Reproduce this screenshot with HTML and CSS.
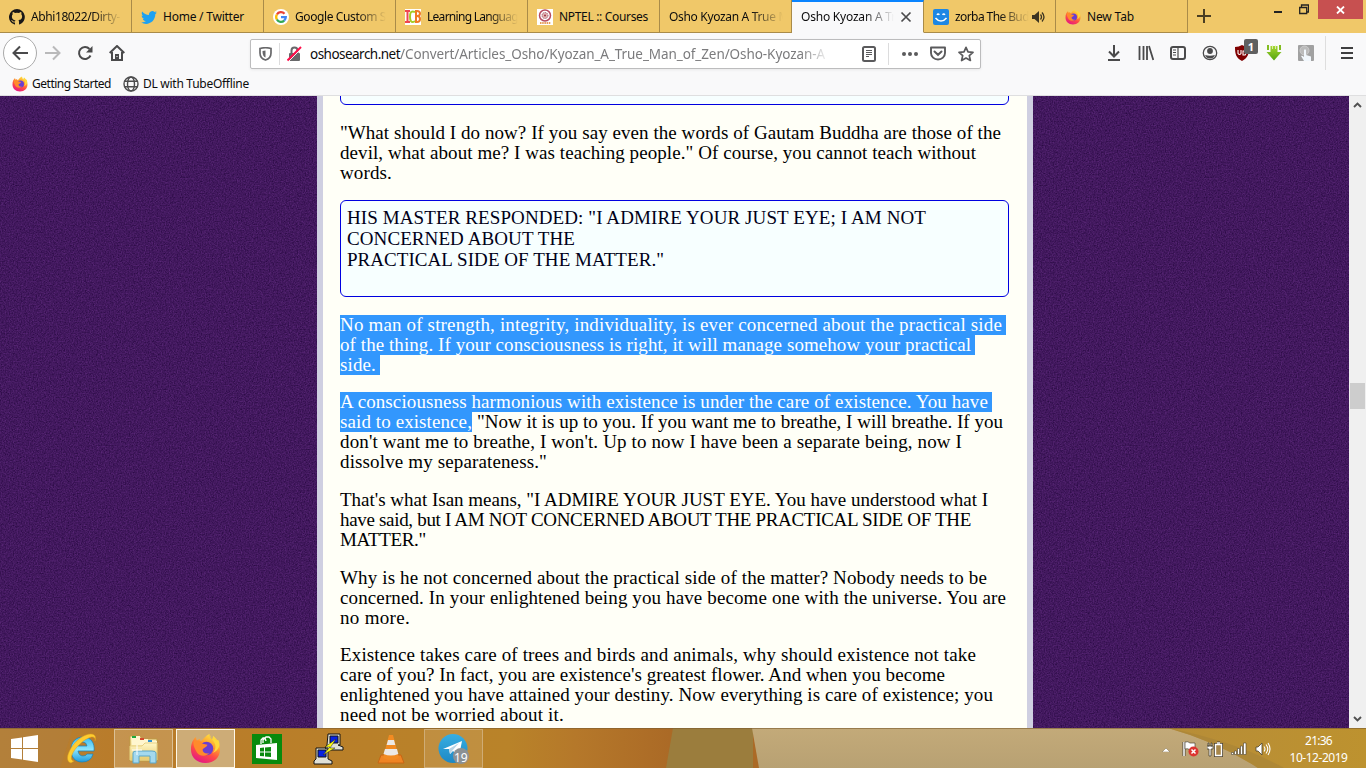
FILE: index.html
```html
<!DOCTYPE html>
<html lang="en">
<head>
<meta charset="utf-8">
<title>Osho Kyozan A True Man of Zen</title>
<link rel="stylesheet" href="styles.css">
</head>
<body>
<svg class="defs" width="0" height="0" aria-hidden="true">
  <defs>
    <linearGradient id="fx" x1=".8" y1="0" x2=".3" y2="1"><stop offset="0" stop-color="#fff044"/><stop offset=".35" stop-color="#ffa22e"/><stop offset=".65" stop-color="#ff4a45"/><stop offset="1" stop-color="#e31587"/></linearGradient>
    <linearGradient id="ie" x1="0" y1="0" x2="0" y2="1"><stop offset="0" stop-color="#39b9f0"/><stop offset=".5" stop-color="#8ce5fb"/><stop offset="1" stop-color="#219bdc"/></linearGradient>
    <linearGradient id="folder" x1="0" y1="0" x2="0" y2="1"><stop offset="0" stop-color="#fff7c8"/><stop offset="1" stop-color="#e9cb6a"/></linearGradient>
    <linearGradient id="tg" x1="0" y1="0" x2="0" y2="1"><stop offset="0" stop-color="#37aee2"/><stop offset="1" stop-color="#1e88c4"/></linearGradient>
    <linearGradient id="dl" x1="0" y1="0" x2="0" y2="1"><stop offset="0" stop-color="#a5d72e"/><stop offset="1" stop-color="#54a310"/></linearGradient>
    <symbol id="firefox" viewBox="0 0 32 32">
      <path d="M1 17C1 10 3 7 6 4l1 4 3-2 1 3c3-3 5-6 9-8 0 3 1 4 3 6l1-4c5 4 7 8 7 14 0 8-6 14-15 14S1 25 1 17z" fill="url(#fx)"/>
      <circle cx="17" cy="16" r="7" fill="#6a3fd0"/>
      <path d="M4 8c4-1 7 0 9 3l5 1c-1 3-4 3-5 5 0 3 3 5 7 4-4 4-12 3-14-3C4 15 3 11 4 8z" fill="#ff8a2b"/>
      <path d="M20 1c0 4 5 6 6 11 1 4-1 7-3 9 7-3 9-9 6-14l-2 1-3-5-1 4z" fill="#ffd83b"/>
    </symbol>
  </defs>
</svg>

<div class="tabs">
  <div class="tab">
    <svg class="fav" viewBox="0 0 16 16"><path d="M8 0a8 8 0 0 0-2.5 15.600c.4.1.5-.2.5-.4v-1.700c-2.200.5-2.700-.9-2.700-.9-.4-1-.9-1.200-.9-1.200-.7-.5.1-.5.1-.5.800.1 1.200.8 1.200.8.7 1.300 1.900.9 2.300.7.100-.5.3-.9.5-1.100-1.800-.2-3.600-.9-3.600-4 0-.9.3-1.600.8-2.100-.1-.2-.4-1 .1-2.100 0 0 .7-.2 2.200.8a7.600 7.600 0 0 1 4 0c1.500-1 2.200-.8 2.200-.8.4 1.100.2 1.900.1 2.100.5.6.8 1.300.8 2.100 0 3.100-1.900 3.700-3.700 3.900.3.300.6.8.6 1.500v2.400c0 .2.100.5.600.4A8 8 0 0 0 8 0z" fill="#191717"/></svg>
    <span class="label fade"><span data-w="89">Abhi18022/Dirty-</span></span>
  </div>
  <div class="tab">
    <svg class="fav" viewBox="0 0 16 16"><path d="M16 3.500l-1.700.5 1.300-1.700-2 .8A3.300 3.300 0 0 0 8 6C5.300 6 3 4.600 1.200 2.500.3 4 .8 6 2.200 7L.7 6.500c0 1.600 1.100 3 2.700 3.300l-1.500.1c.4 1.300 1.600 2.200 3.100 2.200A6.700 6.700 0 0 1 .1 13.500c6.700 3.800 14.200-.7 14.200-8.200z" fill="#1da1f2"/></svg>
    <span class="label"><span data-w="81">Home / Twitter</span></span>
  </div>
  <div class="tab">
    <svg class="fav" viewBox="0 0 16 16"><circle cx="8" cy="8" r="8" fill="#fff"/><g fill="none" stroke-width="2.300"><path d="M3.900 5.500A4.800 4.800 0 0 1 11.500 4.700" stroke="#ea4335"/><path d="M3.900 10.500a4.800 4.800 0 0 1 0-5" stroke="#fbbc05"/><path d="M11.200 11.600a4.800 4.800 0 0 1-7.300-1.100" stroke="#34a853"/><path d="M8 8.100h4.800a4.800 4.800 0 0 1-1.600 3.500" stroke="#4285f4"/></g></svg>
    <span class="label fade"><span data-w="91">Google Custom S</span></span>
  </div>
  <div class="tab">
    <svg class="fav" viewBox="0 0 16 16"><path d="M0 0h16v16H0z" fill="#fff"/><g fill="none" stroke-width="2"><path d="M0 2h5M2.500 2v11M0 13h5" stroke="#ef4650"/><path d="M10 3C5 1 5 5 5 8s1 7 5 4" stroke="#a5cd25"/><path d="M11 2v11M10 2h2q3 0 3 2.500T12 7h-1 1q3 0 3 3t-3 3h-2" stroke="#f17a24"/></g></svg>
    <span class="label fade"><span data-w="91">Learning Languag</span></span>
  </div>
  <div class="tab">
    <svg class="fav" viewBox="0 0 16 16"><path d="M0 0h16v16H0z" fill="#fff"/><circle cx="8" cy="6.500" r="5.500" fill="none" stroke="#b64c60" stroke-width="1.500"/><circle cx="8" cy="6.500" r="3" fill="#e2b7b3" stroke="#8f4660" stroke-dasharray="1 1"/><circle cx="8" cy="6.500" r="1" fill="#a12c44"/><path d="M3 14h11" stroke="#e79a57" stroke-width="2" stroke-dasharray="1.500 .7"/></svg>
    <span class="label"><span data-w="89">NPTEL :: Courses</span></span>
  </div>
  <div class="tab plain"><span class="label fade wide"><span data-w="120">Osho Kyozan A True M</span></span></div>
  <div class="tab plain active"><span class="label fade"><span data-w="95">Osho Kyozan A Tr</span></span>
    <svg class="close" viewBox="0 0 12 12"><path d="M1.500 1.500l9 9m0-9l-9 9" stroke="#4b4b4d" stroke-width="1.700"/></svg></div>
  <div class="tab">
    <svg class="fav" viewBox="0 0 16 16"><rect width="16" height="16" rx="2" fill="#1d87e4"/><path d="M4 5.800q1-1.600 2.400 0m3.200 0q1-1.600 2.400 0M2.500 9q2.500 3 5.500 3t5.500-3" stroke="#fff" fill="none" stroke-width="1.500"/></svg>
    <span class="label fade short"><span data-w="74">zorba The Bud</span></span>
    <svg class="sound" viewBox="0 0 14 12"><path d="M0 4h2.500L7 0v12L2.500 8H0z" fill="#3c3421"/><path d="M8.500 3.500q2 2.500 0 5m1.500-7q4 4.500 0 9" fill="none" stroke="#3c3421" stroke-width="1.300"/></svg>
  </div>
  <div class="tab"><svg class="fav"><use href="#firefox"/></svg><span class="label"><span data-w="47">New Tab</span></span></div>
  <svg class="plus" viewBox="0 0 14 14"><path d="M7 0v14M0 7h14" stroke="#4a3e22" stroke-width="2"/></svg>
  <div class="winctl">
    <svg width="8" height="20"><path d="M0 12h8" stroke="#222" stroke-width="2"/></svg>
    <svg width="10" height="20"><path d="M.7 7.500h7v6h-7zM2.500 7V5h7v7H8" fill="none" stroke="#222" stroke-width="1.300"/></svg>
    <div class="winclose"><svg width="9" height="8" viewBox="0 0 9 8"><path d="M1 .5l7 7m0-7l-7 7" stroke="#fff" stroke-width="1.800"/></svg></div>
  </div>
</div>

<div class="nav">
  <div class="left">
    <span class="back"><svg width="16" height="16" viewBox="0 0 16 16"><path d="M8 1.500L1.500 8 8 14.500M1.500 8H16" fill="none" stroke="#4a4a4b" stroke-width="2"/></svg></span>
    <svg width="16" height="16" viewBox="0 0 16 16"><path d="M8 1.500L14.500 8 8 14.500M14.500 8H0" fill="none" stroke="#b9b9ba" stroke-width="2"/></svg>
    <svg width="16" height="16" viewBox="0 0 16 16"><path d="M13.500 10.500A6 6 0 1 1 12.500 4" fill="none" stroke="#4a4a4b" stroke-width="2"/><path d="M15.500 1v6.500H9z" fill="#4a4a4b"/></svg>
    <svg width="16" height="16" viewBox="0 0 16 16"><path d="M.7 8L8 1l7.300 7M3 7v8h10V7" fill="none" stroke="#4a4a4b" stroke-width="2"/><path d="M6 15V9h4v6" fill="#4a4a4b"/><path d="M8 11v1" stroke="#fff"/></svg>
  </div>
  <div class="url">
    <svg class="shield" width="13" height="14" viewBox="0 0 13 14"><path d="M1 1.500Q6.500 0 12 1.500V6c0 4-2 6-5.500 7C3 12 1 10 1 6z" fill="none" stroke="#68686a" stroke-width="1.700"/><path d="M6.500 3.500v7C4.500 9.500 3.500 8 3.500 4z" fill="#68686a"/></svg>
    <i class="usep"></i>
    <svg class="lock" width="15" height="16" viewBox="0 0 15 16"><path d="M4.500 7V4.500a3 3 0 0 1 6 0V7" fill="none" stroke="#68686a" stroke-width="2"/><rect x="2" y="7" width="11" height="8" rx="1" fill="#68686a"/><path d="M1.500 15.500L14.500 2.500" stroke="#fff" stroke-width="1"/><path d="M.5 14.500L14 1" stroke="#ff0f4b" stroke-width="2"/></svg>
    <span class="host" data-w="90">oshosearch.net</span><span class="path"><span data-w="425">/Convert/Articles_Osho/Kyozan_A_True_Man_of_Zen/Osho-Kyozan-A</span></span>
    <svg class="reader" width="14" height="16" viewBox="0 0 14 16"><rect x="1" y="1" width="12" height="14" rx="1.500" fill="none" stroke="#5a5a5c" stroke-width="2"/><path d="M4 4.500h6M4 6.500h6M4 8.500h6M4 10.500h3" stroke="#5a5a5c"/></svg>
    <i class="usep"></i>
    <svg class="dots" width="16" height="4"><g fill="#5a5a5c"><circle cx="2" cy="2" r="2"/><circle cx="8" cy="2" r="2"/><circle cx="14" cy="2" r="2"/></g></svg>
    <svg class="pocket" width="16" height="15" viewBox="0 0 16 15"><path d="M1 1.500h14v5.500a7 6.500 0 0 1-14 0z" fill="none" stroke="#5a5a5c" stroke-width="1.900" stroke-linejoin="round"/><path d="M4.500 5.500L8 8.800l3.500-3.300" fill="none" stroke="#5a5a5c" stroke-width="2" stroke-linecap="round"/></svg>
    <svg class="star" width="16" height="16" viewBox="0 0 16 16"><path d="M8 1.300l2 4.500 5 .5-3.700 3.300 1.100 4.900L8 12l-4.400 2.500 1.100-4.900L1 6.300l5-.5z" fill="none" stroke="#5a5a5c" stroke-width="1.700" stroke-linejoin="round"/></svg>
  </div>
  <div class="right">
    <svg viewBox="0 0 16 16"><path d="M8 0v11M3 6.500L8 11.500l5-5M2 15h12" fill="none" stroke="#4a4a4b" stroke-width="2"/></svg>
    <svg viewBox="0 0 16 16"><path d="M1.500 1v14M5.500 1v14M9 1v14M11 1l4.300 14" fill="none" stroke="#4a4a4b" stroke-width="1.800"/></svg>
    <svg viewBox="0 0 16 16"><rect x="1" y="2" width="14" height="12" rx="2" fill="none" stroke="#4a4a4b" stroke-width="2"/><path d="M8 2v12M3 5h3M3 7.500h3M3 10h3" stroke="#4a4a4b" stroke-width="1.200"/></svg>
    <svg viewBox="0 0 16 16"><circle cx="8" cy="8" r="6.700" fill="none" stroke="#4a4a4b" stroke-width="1.300"/><circle cx="8" cy="6" r="2.900" fill="#4a4a4b"/><path d="M3 10q5 1.500 10 0-1.500 3.600-5 3.600T3 10z" fill="#4a4a4b"/></svg>
    <span class="ublock"><svg viewBox="0 0 16 16"><path d="M8 0q3 2 7 2c0 7-1 11-7 14C2 13 1 9 1 2q4 0 7-2z" fill="#800000"/><path d="M4 5v3.500q1.500 2 3 0V5m2 5V6h2q2 2 0 4z" fill="none" stroke="#fff" stroke-width="1.100"/></svg><b>1</b></span>
    <svg viewBox="0 0 16 16"><path d="M4.500 1h7v6h4L8 15.500.5 7h4z" fill="url(#dl)"/><path d="M2 0v5M14 0v5" stroke="#83bd21" stroke-width="2"/><path d="M6.500 0v4M9.500 0v4" stroke="#e9f4d1" stroke-width=".8"/></svg>
    <svg viewBox="0 0 16 16"><rect width="16" height="16" rx="1" fill="#a1a1a1"/><circle cx="6.500" cy="5.500" r="4.500" fill="#bbb" stroke="#ccc"/><path d="M6 5q1-1.500 2 0v5l5 1.500V16H6l-3-5q1-1 3 1z" fill="#f1f7fc"/></svg>
    <i class="nsep"></i>
    <svg class="menu" width="12" height="12"><path d="M0 1h12M0 6h12M0 11h12" stroke="#3f3f40" stroke-width="2"/></svg>
  </div>
</div>

<div class="bookmarks">
  <svg width="16" height="16"><use href="#firefox"/></svg><span data-w="79">Getting Started</span>
  <svg class="globe" width="16" height="16" viewBox="0 0 16 16"><g fill="none" stroke="#4c4c4d" stroke-width="1.400"><circle cx="8" cy="8" r="7"/><ellipse cx="8" cy="8" rx="3.500" ry="7"/><path d="M1.500 5.200h13M1.500 10.800h13"/></g></svg><span data-w="106">DL with TubeOffline</span>
</div>

<div class="page">
  <svg class="texture" width="1349" height="632"><filter id="noise" x="0" y="0" width="100%" height="100%" color-interpolation-filters="sRGB"><feTurbulence type="fractalNoise" baseFrequency=".75" numOctaves="2" seed="4"/><feColorMatrix values=".23 .08 0 0 .105  .14 .05 0 0 .002  .25 .08 0 0 .205  0 0 0 0 1"/></filter><rect width="1349" height="632" filter="url(#noise)"/></svg>
  <main class="sheet">
    <div class="quote first"></div>
    <p><span class="ln"><span data-w="661">"What should I do now? If you say even the words of Gautam Buddha are those of the</span></span>
    <span class="ln"><span data-w="636">devil, what about me? I was teaching people." Of course, you cannot teach without</span></span>
    <span class="ln"><span data-w="52">words.</span></span></p>
    <div class="quote"><span class="ln"><span data-w="579">HIS MASTER RESPONDED: "I ADMIRE YOUR JUST EYE; I AM NOT</span></span>
    <span class="ln"><span data-w="228">CONCERNED ABOUT THE</span></span>
    <span class="ln"><span data-w="317">PRACTICAL SIDE OF THE MATTER."</span></span></div>
    <p><span class="ln"><span class="sel more" data-w="662">No man of strength, integrity, individuality, is ever concerned about the practical side</span></span>
    <span class="ln"><span class="sel more" data-w="631">of the thing. If your consciousness is right, it will manage somehow your practical</span></span>
    <span class="ln"><span class="sel more" data-w="36">side.</span></span></p>
    <p><span class="ln"><span class="sel more" data-w="648">A consciousness harmonious with existence is under the care of existence. You have</span></span>
    <span class="ln"><span class="sel" data-w="132">said to existence,</span><span class="rest" data-w="526">"Now it is up to you. If you want me to breathe, I will breathe. If you</span></span>
    <span class="ln"><span data-w="622">don't want me to breathe, I won't. Up to now I have been a separate being, now I</span></span>
    <span class="ln"><span data-w="207">dissolve my separateness."</span></span></p>
    <p><span class="ln"><span data-w="648">That's what Isan means, "I ADMIRE YOUR JUST EYE. You have understood what I</span></span>
    <span class="ln"><span data-w="631">have said, but I AM NOT CONCERNED ABOUT THE PRACTICAL SIDE OF THE</span></span>
    <span class="ln"><span data-w="86">MATTER."</span></span></p>
    <p><span class="ln"><span data-w="647">Why is he not concerned about the practical side of the matter? Nobody needs to be</span></span>
    <span class="ln"><span data-w="666">concerned. In your enlightened being you have become one with the universe. You are</span></span>
    <span class="ln"><span data-w="70">no more.</span></span></p>
    <p><span class="ln"><span data-w="636">Existence takes care of trees and birds and animals, why should existence not take</span></span>
    <span class="ln"><span data-w="605">care of you? In fact, you are existence's greatest flower. And when you become</span></span>
    <span class="ln"><span data-w="653">enlightened you have attained your destiny. Now everything is care of existence; you</span></span>
    <span class="ln"><span data-w="224">need not be worried about it.</span></span></p>
  </main>
  <div class="scroll">
    <svg width="9" height="6"><path d="M1 5l3.500-3.500L8 5" fill="none" stroke="#505050" stroke-width="1.900"/></svg>
    <div class="thumb"></div>
    <svg width="9" height="6"><path d="M1 1l3.500 3.500L8 1" fill="none" stroke="#505050" stroke-width="1.900"/></svg>
  </div>
</div>

<div class="taskbar">
  <svg class="wall" width="1366" height="40" viewBox="0 0 1366 40">
    <defs><linearGradient id="wood" gradientUnits="userSpaceOnUse" x1="0" y1="0" x2="670" y2="0"><stop offset="0" stop-color="#b78033"/><stop offset=".2" stop-color="#b97b29"/><stop offset=".76" stop-color="#b98329"/><stop offset=".86" stop-color="#b5782a"/><stop offset="1" stop-color="#ab6a26"/></linearGradient>
    <linearGradient id="sand" x1="0" y1="0" x2="0" y2="1"><stop offset="0" stop-color="#c3aa79"/><stop offset="1" stop-color="#b8a173"/></linearGradient>
    <linearGradient id="gold" x1="0" y1="0" x2="1" y2="0"><stop offset="0" stop-color="#b78d38"/><stop offset="1" stop-color="#bd922f"/></linearGradient></defs>
    <path d="M0 0h1366v40H0z" fill="url(#wood)"/><path d="M0 0h73L60 40H0z" fill="#ad8045" opacity=".4"/>
    <path d="M673 0h80v40h-87z" fill="#9b7d3d"/><path d="M752 0h614v40H759z" fill="url(#sand)"/>
    <path d="M1168 0h198v40h-108q-40-26-90-40z" fill="url(#gold)"/><path d="M1168 0q70 14 116 40h-26q-40-26-90-40z" fill="#a98438" opacity=".7"/>
    <path d="M0 .5h1366" stroke="#7c5d31" opacity=".6"/>
  </svg>
  <div class="apps">
    <span class="app"><svg width="27" height="27" viewBox="0 0 27 27"><path d="M0 4l11-1.500v10.500H0zM12 2.300L27 0v13H12zM0 14h11v10.500L0 23zM12 14h15v13l-15-2.300z" fill="#fff"/></svg></span>
    <span class="app ie"><svg width="32" height="32" viewBox="0 0 32 32"><path d="M28 19H12q1 5 5 5 3 0 4-2h6q-2 8-11 8C9 30 5 25 5 18 5 10 10 5 17 5c8 0 12 6 11 14zM12 14h9q-.5-4-4.500-4T12 14z" fill="url(#ie)" stroke="#1683bd" stroke-width=".7"/><path d="M5 31C-3 29 4 14 13 7 22 0 32 0 29 9c1-7-7-4-14 2C7 18 2 28 8 29z" fill="#ffcc2f" stroke="#d99c1d" stroke-width=".5"/></svg></span>
    <span class="app open"><svg width="32" height="30" viewBox="0 0 32 30"><path d="M2 2h10l2 3h15v22H2z" fill="url(#folder)" stroke="#bd9a42"/><path d="M4 2h8v3h8v2h9v4H4z" fill="#fff6cf"/><path d="M4 3h4" stroke="#20aa3d" stroke-width="2"/><path d="M12 5h4" stroke="#d44a2d" stroke-width="2"/><path d="M20 7h4" stroke="#3293d0" stroke-width="2"/><path d="M2 12h12l3-3h12v17H2z" fill="url(#folder)" stroke="#e7d184"/><path d="M5 29V19q0-2 3-2h16q4 0 4 2v10h-6v-7H11v7z" fill="#a4d9ee" stroke="#5aa6c8"/><path d="M9 11v10M4 16h10" stroke="#fff" stroke-width="1"/></svg></span>
    <span class="app open cur"><svg width="31" height="31"><use href="#firefox"/></svg></span>
    <span class="app"><svg width="30" height="30" viewBox="0 0 30 30"><path d="M0 0h30v30H0z" fill="#098a0d"/><path d="M4 11l21-2v17L4 24z" fill="#fff"/><path d="M9 10V6l2-2h2l1 3m-3 2V6l3-3h3l2 2v4" stroke="#fff" fill="none" stroke-width="1.300"/><path d="M8 14l4-.4v3.900H8zm5-.5l6-.5v4.500h-6zM8 18.500h4v3.800L8 22zm5 0h6v4.500l-6-.6z" fill="#098a0d"/></svg></span>
    <span class="app"><svg width="32" height="32" viewBox="0 0 32 32"><g stroke="#151515" fill="#e0e0d6"><path d="M15 1h12v11h-2l5 2v3H15l-3-2 2-3zM3 15h12v11l4 2v3H1v-3l2-2z"/><path d="M17 3h8v7h-8zM5 17h8v7H5z" fill="#0721e2"/></g><path d="M23 6L12 14h5l-7 8 12-7h-5z" fill="#ffff14" stroke="#222" stroke-width=".5"/></svg></span>
    <span class="app"><svg width="28" height="30" viewBox="0 0 28 30"><path d="M4 21h20l3 8H1z" fill="#ef8423" stroke="#c86613"/><path d="M12 1h4l6 23q-8 4-16 0z" fill="#f28b22"/><path d="M11 6h6l1.300 5H9.600zM8 15h12l1.300 5Q14 23 6.500 20z" fill="#ece9e5"/></svg></span>
    <span class="app open tel"><svg width="31" height="30" viewBox="0 0 31 30"><circle cx="15" cy="14.500" r="14.500" fill="url(#tg)"/><path d="M5 15L24 7l-3 15-6-5-3 3-1-5z" fill="#fff"/><path d="M11 15l10-6-7 8-2 3z" fill="#b9d4e5"/><circle cx="23" cy="22" r="8" fill="#8c9194"/></svg><b>19</b></span>
  </div>
  <div class="tray">
    <svg width="8" height="5"><path d="M0 5l4-4 4 4z" fill="#fff" stroke="#796a48" stroke-width=".5"/></svg>
    <svg width="17" height="16" viewBox="0 0 17 16"><path d="M2 1v14" stroke="#4d4638" stroke-width="3"/><path d="M2 1v14" stroke="#fff" stroke-width="1.500"/><path d="M3 1q3-1 5 1h5v7H8Q6 7 3 8z" fill="#fff" stroke="#4d4638" stroke-width=".7"/><circle cx="11.500" cy="10.500" r="5" fill="#dc3530"/><path d="M9.500 8.500l4 4m0-4l-4 4" stroke="#fff" stroke-width="1.500"/></svg>
    <svg width="16" height="16" viewBox="0 0 16 16"><path d="M0 5h6v3H4v7H2V8H0zM1 2h1v3H1zM4 2h1v3H4z" fill="#fff" stroke="#4a4130" stroke-width=".8"/><path d="M8.500 3.500h6v11h-6zM10 2h3" fill="none" stroke="#4a4130" stroke-width="3"/><path d="M8.500 3.500h6v11h-6z" fill="#a8874a" stroke="#fff" stroke-width="1.400"/><path d="M10 2h3" stroke="#fff" stroke-width="1.400"/></svg>
    <svg width="16" height="14" viewBox="0 0 16 14"><g fill="#fff" stroke="#4a4130" stroke-width=".6"><path d="M.5 10.500h2v2h-2zM3.500 9h2v3.500h-2zM6.500 6.500h2v6h-2zM9.500 4h2v8.500h-2zM12.500 1h2.500v11.500h-2.500z"/></g></svg>
    <svg width="16" height="14" viewBox="0 0 16 14"><path d="M1 5h2l4-4v12L3 9H1z" fill="#fff" stroke="#4a4130" stroke-width=".8"/><path d="M9 4.500q2 2.500 0 5m2-7q3.500 4.500 0 9m2-10.500q4 6 0 12" fill="none" stroke="#fff" stroke-width="1.100"/></svg>
  </div>
  <div class="clock"><span data-w="27">21:36</span><span data-w="58">10-12-2019</span></div>
</div>
<script src="fit.js"></script>
</body>
</html>
```
FILE: styles.css
```css
* { box-sizing: border-box; }
body { margin: 0; width: 1366px; height: 768px; overflow: hidden; display: flex; flex-direction: column; font: 12px "Noto Sans", sans-serif; color: #0c0c0d; background: #f9f9fa; }
svg { flex: none; display: block; }
.defs { position: absolute; }
[data-w] { display: inline-block; white-space: pre; }

.tabs { height: 33px; flex: none; display: flex; background: #f0c869; }
.tab { width: 132px; height: 33px; flex: none; display: flex; align-items: center; padding: 2px 0 0 9px; gap: 6px; border-right: 1px solid #a98b49; border-bottom: 1px solid #a98b49; }
.tab.active { background: #f9f9fa; border-bottom-color: #f9f9fa; border-top: 2px solid #0a84ff; padding-top: 0; }
.fav { width: 16px; height: 16px; }
.label { flex: 1; overflow: hidden; white-space: nowrap; line-height: 18px; }
.label.fade { margin-right: 9px; -webkit-mask-image: linear-gradient(90deg, #000 calc(100% - 30px), transparent); mask-image: linear-gradient(90deg, #000 calc(100% - 30px), transparent); }
.label.wide { margin-right: 0; -webkit-mask-image: linear-gradient(90deg, #000 82px, transparent 114px); mask-image: linear-gradient(90deg, #000 82px, transparent 114px); }
.tab.active .label { margin-right: 0; }
.label.fade.short { margin-right: -3px; }
.close { width: 12px; height: 12px; margin-right: 11px; }
.sound { width: 14px; height: 12px; margin-right: 9px; }
.plus { width: 14px; height: 14px; margin: 9px 0 0 9px; }
.winctl { margin-left: auto; display: flex; }
.winctl > svg:first-child { margin-right: 17px; }
.winctl > svg + svg { margin-right: 9px; }
.winclose { width: 45px; height: 19px; margin-right: 3px; background: #c75050; display: flex; align-items: center; justify-content: center; }

.nav { height: 39px; flex: none; display: flex; align-items: center; }
.left { width: 250px; display: flex; align-items: center; padding: 1px 0 0 3px; gap: 16px; }
.back { width: 34px; height: 34px; border: 1px solid #aaa; border-radius: 50%; background: #fff; display: flex; align-items: center; justify-content: center; margin-right: -8px; }
.url { width: 731px; height: 30px; margin-top: 2px; border: 1px solid #bcbcbd; border-radius: 2px; background: #fff; box-shadow: 0 1px 3px #0001; display: flex; align-items: center; font-size: 13.500px; }
.shield { margin-left: 8px; }
.usep { width: 1px; height: 22px; background: #dcdcdd; flex: none; }
.shield + .usep { margin: 0 7px; }
.host { margin-left: 8px; }
.path { width: 441px; color: #7b7b7d; -webkit-mask-image: linear-gradient(90deg, #000 400px, transparent 430px); mask-image: linear-gradient(90deg, #000 400px, transparent 430px); }
.url .reader { margin: 0 12px 0 21px; }
.dots { margin-left: 13px; }
.pocket { margin-left: 12px; }
.star { margin-left: 12px; }
.right { flex: 1; display: flex; align-items: center; gap: 16px; padding-left: 125px; padding-top: 1px; }
.right svg { width: 16px; height: 16px; }
.ublock { position: relative; }
.ublock b { position: absolute; left: 10px; top: -6px; width: 14px; height: 15px; border-radius: 2px; background: #606060; color: #fff; font: bold 11px/15px "Open Sans", sans-serif; text-align: center; }
.nsep { width: 1px; height: 34px; background: #dedede; margin-left: -5px; }
.right .menu { width: 12px; height: 12px; margin-left: -1px; }

.bookmarks { height: 24px; flex: none; border-bottom: 1px solid #dfdfe0; display: flex; align-items: center; padding-left: 12px; }
.bookmarks > span { margin-left: 4px; }
.globe { margin-left: 12px; }

.page { height: 632px; flex: none; display: flex; position: relative; overflow: hidden; background: #43195f; }
.texture { position: absolute; left: 0; top: 0; }
.sheet { position: relative; width: 716px; height: 632px; margin-left: 317px; margin-right: 316px; flex: none; overflow: hidden; border: solid #cfcfe1; border-width: 0 6px; background: #fffff7; padding: 0 18px 0 17px; font: 19px/20px "Liberation Serif", Georgia, serif; color: #000; }
.sheet p { margin: 0 0 17.600px; }
.ln { display: block; height: 20px; white-space: nowrap; }
.sheet [data-w] { display: inline; line-height: 20px; }
.quote { height: 97px; border: 1px solid #0000e0; border-radius: 6px; background: #f7ffff; margin-bottom: 17.600px; padding: 6px; color: #000018; }
.quote .ln { height: 21px; line-height: 21px; }
.quote.first { height: 30px; margin-top: -21px; }
.sheet .sel { display: inline-block; height: 20px; background: #3297fd; color: #fff; }
.sel.more { box-shadow: 4px 0 #3297fd; }
.rest { margin-left: 5px; }
.scroll { width: 17px; flex: none; position: relative; background: #f0f0f0; display: flex; flex-direction: column; align-items: center; padding: 6px 0; }
.thumb { width: 15px; height: 26px; background: #cdcdcd; margin: 275px 0 auto; }

.taskbar { height: 40px; flex: none; position: relative; display: flex; color: #fff; }
.wall { position: absolute; left: 0; top: 0; }
.apps { position: relative; display: flex; gap: 3px; }
.app { width: 59px; height: 40px; display: flex; align-items: center; justify-content: center; }
.app:first-child { width: 49px; }
.app:nth-child(n+3) { height: 39px; margin-top: 1px; }
.app:nth-child(n+5):nth-child(-n+7) { padding-right: 1px; }
.app.open { border: 1px solid #dbc095; background: #d7b98666; }
.app.cur { border-color: #fff8e8; background: #d5bd93bb; }
.app.tel { border-color: #cfac75; background: #d7b98640; }
.tel { position: relative; }
.tel b { position: absolute; left: 29px; top: 20px; font: 12px/16px "Noto Sans", sans-serif; }
.tray { position: relative; display: flex; align-items: center; gap: 8px; margin-left: auto; margin-right: 18px; padding-top: 2px; }
.tray > svg:first-child { margin-right: 4px; }
.clock { position: relative; width: 59px; margin-right: 18px; display: flex; flex-direction: column; align-items: center; padding-top: 4px; line-height: 17px; }
```
FILE: fit.js
```js
// Track each run of text so that it fills its measure.
document.querySelectorAll('[data-w]').forEach(function (el) {
  var natural = el.getBoundingClientRect().width;
  var target = Number(el.dataset.w);
  el.style.letterSpacing = ((target - natural) / el.textContent.length) + 'px';
});
```
